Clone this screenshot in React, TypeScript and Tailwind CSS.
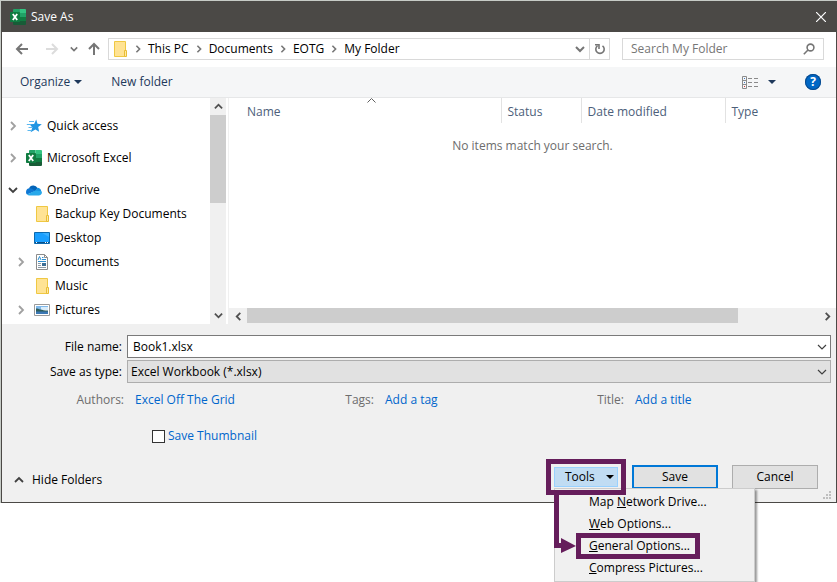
import React from "react";

type IconProps = { className?: string };

function Chevron({ dir, className = "", w = 10, s = 2 }: { dir: "up" | "down" | "left" | "right"; className?: string; w?: number; s?: number }) {
  const d = {
    up: "M1 7 5 3 9 7",
    down: "M1 3 5 7 9 3",
    left: "M7 1 3 5 7 9",
    right: "M3 1 7 5 3 9",
  }[dir];
  return (
    <svg className={`shrink-0 ${className}`} width={w} height={w} viewBox="0 0 10 10" fill="none" stroke="currentColor" strokeWidth={s} aria-hidden="true">
      <path d={d} />
    </svg>
  );
}

function Caret({ className = "" }: IconProps) {
  return (
    <svg className={`shrink-0 ${className}`} width="8" height="4" viewBox="0 0 8 4" fill="currentColor" aria-hidden="true">
      <path d="M0 0h8L4 4z" />
    </svg>
  );
}

function ExcelIcon() {
  return (
    <svg className="shrink-0" width="16" height="16" viewBox="0 0 16 16" aria-hidden="true">
      <path fill="#21a366" d="M3 1a1 1 0 0 1 1-1h5.500v4H3z" />
      <path fill="#33c481" d="M9.500 0H15a1 1 0 0 1 1 1v3H9.500z" />
      <path fill="#107c41" d="M3 4h6.500v4H3zM9.500 8H16v4H9.500z" />
      <path fill="#21a366" d="M9.500 4H16v4H9.500z" />
      <path fill="#185c37" d="M3 8h6.500v4H16v3a1 1 0 0 1-1 1H4a1 1 0 0 1-1-1z" />
      <rect fill="#107c41" y="3" width="10" height="10" rx="0.800" />
      <path stroke="#fff" strokeWidth="1.800" d="m2.800 5 4.400 6M7.200 5l-4.400 6" />
    </svg>
  );
}

function FolderIcon() {
  return (
    <svg className="shrink-0" width="16" height="16" viewBox="0 0 16 16" aria-hidden="true">
      <path fill="#ffe394" stroke="#efc843" d="M2.500.5h11v15h-11z" />
      <path fill="#ffe9a2" stroke="#e9bd35" d="M12.500 9.500h2v6h-2z" />
    </svg>
  );
}

function StarIcon() {
  return (
    <svg className="shrink-0" width="16" height="16" viewBox="0 0 16 16" aria-hidden="true">
      <path fill="#2196e3" d="m10.200 1.500 1.300 4.300 4.300.4-3.600 2.800.9 4.800-3.700-2.300-4.800 2.800L6.400 9.500 3.500 6.300l4.600-.4z" />
      <path stroke="#5cb8ef" d="M3 3.500h5M.800 6.500h4M2.500 9.500h4M1.500 12.500h4" />
    </svg>
  );
}

function CloudIcon() {
  return (
    <svg className="shrink-0" width="16" height="16" viewBox="0 0 16 16" aria-hidden="true">
      <path fill="#0364b8" d="M3 6.500A4.600 4.600 0 0 1 11.500 6L9 10z" />
      <path fill="#0f78d4" d="M3.500 6.300C1.500 6.300 0 8 0 10c0 1 .4 2 1 2.500L9.500 9 6 6.800a4 4 0 0 0-2.500-.5z" />
      <path fill="#1490df" d="M9 9l2.500-3.200c2 0 3.500 1.500 3.700 3.200L14 11z" />
      <path fill="#28a8ea" d="M9.500 8.500 1 12.500c.6.600 1.500 1 2.500 1H13a3 3 0 0 0 2.600-4.300z" />
    </svg>
  );
}

function DesktopIcon() {
  return (
    <svg className="shrink-0" width="16" height="16" viewBox="0 0 16 16" aria-hidden="true">
      <path fill="#1a9fff" stroke="#0c69ae" d="M.500 2.500h15v11H.500z" />
      <path fill="#3bb0ff" d="M8 3h7v4z" />
      <path stroke="#0b4f86" d="M1 12.500h14" />
      <path stroke="#fff" d="M2 12.500h1M11 12.500h1M13 12.500h1" />
    </svg>
  );
}

function DocumentIcon() {
  return (
    <svg className="shrink-0" width="16" height="16" viewBox="0 0 16 16" aria-hidden="true">
      <path fill="#fff" stroke="#8c8c8c" d="M2.500.5h8l3 3v12h-11zM10.500.5v3h3" />
      <path fill="none" stroke="#2f8fd0" d="m4 6 1.500-3.500L7 6M8 3.500h1.500M8 5.500h4M4 7.500h8" />
      <path stroke="#8c9aa6" d="M4 9.500h3M4 11.500h3M4 13.500h8" />
      <path fill="#3d6f96" d="M8 9h4v3H8z" />
    </svg>
  );
}

function PictureIcon() {
  return (
    <svg className="shrink-0" width="16" height="16" viewBox="0 0 16 16" aria-hidden="true">
      <path fill="#fff" stroke="#9a9a9a" d="M.500 2.500h15v11H.500z" />
      <path fill="#7fb8ea" d="M2 4h12v4H2z" />
      <path fill="#d8ecfa" d="M7 5h7v3H7z" />
      <path fill="#2d5d5b" d="M2 6.500c3 0 5 2 12 2V10H2z" />
      <path fill="#3c78b4" d="M2 9.500h12V12H2z" />
    </svg>
  );
}

function Arrow({ dir, className }: { dir: "left" | "right" | "up"; className?: string }) {
  const d = {
    left: "M14 8H3M8 3 3 8l5 5",
    right: "M2 8h11M8 3l5 5-5 5",
    up: "M8 14V3M3 8l5-5 5 5",
  }[dir];
  return (
    <svg className={className} width="16" height="16" viewBox="0 0 16 16" fill="none" stroke="currentColor" strokeWidth="2" aria-hidden="true">
      <path d={d} />
    </svg>
  );
}

const crumbs = ["This PC", "Documents", "EOTG", "My Folder"];

const roots = [
  { name: "Quick access", icon: <StarIcon />, open: false },
  { name: "Microsoft Excel", icon: <ExcelIcon />, open: false },
  { name: "OneDrive", icon: <CloudIcon />, open: true },
];

const children = [
  { name: "Backup Key Documents", icon: <FolderIcon />, expandable: false },
  { name: "Desktop", icon: <DesktopIcon />, expandable: false },
  { name: "Documents", icon: <DocumentIcon />, expandable: true },
  { name: "Music", icon: <FolderIcon />, expandable: false },
  { name: "Pictures", icon: <PictureIcon />, expandable: true },
];

const menuItems = [
  { before: "Map ", key: "N", after: "etwork Drive...", marked: false },
  { before: "", key: "W", after: "eb Options...", marked: false },
  { before: "", key: "G", after: "eneral Options...", marked: true },
  { before: "", key: "C", after: "ompress Pictures...", marked: false },
];

function TitleBar() {
  return (
    <header className="flex h-[31px] items-center bg-[#4b4946] pr-2.5 pl-2 text-white">
      <ExcelIcon />
      <h1 className="ml-[5px] flex-1">Save As</h1>
      <button type="button" aria-label="Close">
        <svg width="10" height="10" viewBox="0 0 10 10" stroke="currentColor" strokeWidth="1.200" aria-hidden="true">
          <path d="m0 0 10 10M10 0 0 10" />
        </svg>
      </button>
    </header>
  );
}

function AddressRow() {
  return (
    <div className="flex h-[35px] items-center bg-white px-3 pb-0.5 text-[#767676]">
      <button type="button" aria-label="Back"><Arrow dir="left" /></button>
      <button type="button" aria-label="Forward" className="ml-3.5 text-[#dcdcdc]"><Arrow dir="right" /></button>
      <button type="button" aria-label="Recent locations" className="ml-2.5"><Chevron dir="down" w={8} /></button>
      <button type="button" aria-label="Up" className="ml-2"><Arrow dir="up" /></button>
      <nav aria-label="Address" className="ml-1.5 flex h-[22px] flex-1 items-center border border-[#d9d9d9] pl-[3px]">
        <FolderIcon />
        <ol className="flex flex-1 items-center text-black">
          {crumbs.map((c) => (
            <li key={c} className="flex items-center">
              <span className="flex w-5 justify-center text-[#767676]"><Chevron dir="right" w={8} /></span>
              <button type="button">{c}</button>
            </li>
          ))}
        </ol>
        <button type="button" aria-label="Previous locations" className="px-1"><Chevron dir="down" w={10} /></button>
        <button type="button" aria-label="Refresh" className="flex h-full w-5 items-center justify-center border-l border-[#d9d9d9]">
          <svg width="12" height="12" viewBox="0 0 12 12" fill="none" stroke="currentColor" strokeWidth="1.600" aria-hidden="true">
            <path d="M8.500 2.800A4.200 4.200 0 1 1 3.500 2.800M1 1.800h4V6" />
          </svg>
        </button>
      </nav>
      <label className="ml-3 flex h-[22px] w-[202px] items-center border border-[#d9d9d9] px-2">
        <input type="search" aria-label="Search My Folder" placeholder="Search My Folder" className="min-w-0 flex-1 outline-none placeholder:text-[#767676]" />
        <svg width="12" height="12" viewBox="0 0 12 12" fill="none" stroke="currentColor" strokeWidth="1.600" aria-hidden="true">
          <circle cx="7.500" cy="4.500" r="3.400" />
          <path d="M5 7 .8 11.200" />
        </svg>
      </label>
    </div>
  );
}

function Toolbar() {
  return (
    <div className="flex h-[31px] items-center border-b border-[#e6e7e8] bg-[#f5f6f7] pr-[15px] pl-[18px] text-[#1e395b]">
      <button type="button" className="flex items-center gap-1">Organize <Caret /></button>
      <button type="button" className="ml-[29px]">New folder</button>
      <button type="button" aria-label="Change your view" className="ml-auto flex items-center gap-2.5">
        <svg width="16" height="13" viewBox="0 0 16 13" fill="none" aria-hidden="true">
          <path stroke="#8a8a8a" d="M.500.5h4v12h-4zM.500 4.500h4M.500 8.500h4M6 2.500h4M12 2.500h4M6 6.500h4M12 6.500h4M6 10.500h4M12 10.500h4" />
          <path stroke="#3d78c0" d="M2 2.500h1M2 6.500h1" />
          <path stroke="#d03030" d="M2 10.500h1" />
        </svg>
        <Caret />
      </button>
      <button type="button" aria-label="Help" className="ml-[29px] flex size-4 items-center justify-center rounded-full bg-[#0067c5] text-xs font-bold text-white ring-1 ring-[#0a4a8c] ring-inset">?</button>
    </div>
  );
}

function FolderTree() {
  return (
    <div className="flex w-[227px] shrink-0 border-r border-[#f0f0f0]">
      <nav aria-label="Folders" className="flex-1 pt-4 pb-0.5">
        <ul className="space-y-2">
          {roots.map((r) => (
            <li key={r.name}>
              <div className="flex h-6 items-center pl-1.5">
                <button type="button" aria-label={`Toggle ${r.name}`} className={r.open ? "text-[#404040]" : "text-[#a0a0a0]"}>
                  <Chevron dir={r.open ? "down" : "right"} w={10} s={1.8} />
                </button>
                <span className="ml-2 flex items-center gap-[5px]">{r.icon}{r.name}</span>
              </div>
              {r.open && (
                <ul>
                  {children.map((c) => (
                    <li key={c.name} className="flex h-6 items-center pl-3.5">
                      <span className="w-2.5 text-[#a0a0a0]">
                        {c.expandable && <button type="button" aria-label={`Toggle ${c.name}`} className="block"><Chevron dir="right" w={10} s={1.8} /></button>}
                      </span>
                      <span className="ml-2 flex items-center gap-[5px] whitespace-nowrap">{c.icon}{c.name}</span>
                    </li>
                  ))}
                </ul>
              )}
            </li>
          ))}
        </ul>
      </nav>
      <div className="mr-[2px] flex w-4 flex-col items-center bg-[#f0f0f0] text-[#505050]">
        <span className="flex h-[17px] items-center"><Chevron dir="up" w={9} /></span>
        <span className="h-[88px] w-full bg-[#cdcdcd]" />
        <span className="mt-auto flex h-[17px] items-center"><Chevron dir="down" w={9} /></span>
      </div>
    </div>
  );
}

function FileList() {
  return (
    <div className="flex min-w-0 flex-1 flex-col">
      <table className="w-full table-fixed text-left">
        <thead>
          <tr className="h-[25px] text-[#4c607a]">
            <th className="relative pt-0.5 pl-[18px] font-normal">
              Name
              <span className="absolute top-0 right-0 left-3.5 flex justify-center text-[#606060]">
                <svg width="9" height="5" viewBox="0 0 9 5" fill="none" stroke="currentColor" aria-hidden="true"><path d="M.500 4.500l4-4 4 4" /></svg>
              </span>
            </th>
            <th className="w-20 border-l border-[#e2e2e2] pt-0.5 pl-1.5 font-normal">Status</th>
            <th className="w-36 border-l border-[#e2e2e2] pt-0.5 pl-1.5 font-normal">Date modified</th>
            <th className="w-[111px] border-l border-[#e2e2e2] pt-0.5 pl-1.5 font-normal">Type</th>
          </tr>
        </thead>
        <tbody>
          <tr>
            <td colSpan={4} className="pt-[15px] text-center text-[#6d6d6d]">No items match your search.</td>
          </tr>
        </tbody>
      </table>
      <div className="mt-auto flex h-4 items-center bg-[#f0f0f0] text-[#505050]">
        <span className="flex w-[18px] justify-center"><Chevron dir="left" w={9} /></span>
        <span className="flex h-full flex-1"><span className="h-[15px] w-[86%] bg-[#cdcdcd]" /></span>
        <span className="flex w-[18px] justify-center"><Chevron dir="right" w={9} /></span>
      </div>
    </div>
  );
}

function Meta({ label, value }: { label: string; value: string }) {
  return (
    <div className="flex w-[250px] gap-[11px]">
      <dt className="w-[122px] text-right text-[#6d6d6d]">{label}</dt>
      <dd><a href="#edit" className="text-[#0066cc]">{value}</a></dd>
    </div>
  );
}

function ToolsMenu() {
  return (
    <div className="relative">
      <div className="border-[5px] border-[#651d5b] bg-[#f0f0f0] p-[3px]">
        <button type="button" aria-haspopup="menu" aria-expanded="true" className="flex h-5 w-16 items-center justify-between border border-[#99d1ff] bg-[#c0dcf3] pr-[3px] pl-2.5">
          Tools <Caret />
        </button>
      </div>
      <ul role="menu" className="absolute top-[29px] left-2 w-[201px] border border-[#ccc] bg-[#f0f0f0] py-0.5 shadow-[2px_2px_2px_rgba(0,0,0,0.400)]">
        {menuItems.map((m) => (
          <li key={m.key} role="none" className="relative">
            <button type="button" role="menuitem" className="block h-[22px] w-full pl-[34px] text-left whitespace-pre">
              {m.before}<u>{m.key}</u>{m.after}
            </button>
            {m.marked && <span className="pointer-events-none absolute -inset-y-0.5 left-[21px] w-[124px] border-[5px] border-[#651d5b]" />}
          </li>
        ))}
      </ul>
      <span className="pointer-events-none absolute inset-0 border-[5px] border-[#651d5b]" />
      <svg className="pointer-events-none absolute top-[34px] left-2 text-[#651d5b]" width="22" height="60" viewBox="0 0 22 60" fill="currentColor" aria-hidden="true">
        <path d="M0 0h5v50h2v-5l15 8-15 7v-5H0z" />
      </svg>
    </div>
  );
}

function SaveForm() {
  return (
    <form className="bg-[#f0f0f0] pt-[11px]" onSubmit={(e) => e.preventDefault()}>
      <div className="grid grid-cols-[120px_1fr] items-center gap-x-[5px] gap-y-[2px] pr-[5px]">
        <label htmlFor="file-name" className="text-right">File name:</label>
        <div className="relative">
          <input id="file-name" type="text" defaultValue="Book1.xlsx" className="block h-[23px] w-full border border-[#7a7a7a] bg-white pr-6 pl-[5px] outline-none" />
          <Chevron dir="down" w={10} s={1.2} className="pointer-events-none absolute top-[7px] right-1 text-[#404040]" />
        </div>
        <label htmlFor="file-type" className="text-right">Save as type:</label>
        <div className="relative">
          <select id="file-type" className="block h-[23px] w-full appearance-none border border-[#adadad] bg-[#e1e1e1] pr-6 pl-[3px] outline-none">
            <option>Excel Workbook (*.xlsx)</option>
          </select>
          <Chevron dir="down" w={10} s={1.2} className="pointer-events-none absolute top-[7px] right-1 text-[#404040]" />
        </div>
      </div>
      <dl className="mt-[9px] flex leading-4">
        <Meta label="Authors:" value="Excel Off The Grid" />
        <Meta label="Tags:" value="Add a tag" />
        <Meta label="Title:" value="Add a title" />
      </dl>
      <label className="mt-5 ml-[150px] flex w-fit items-center gap-[3px] text-[#0066cc]">
        <input type="checkbox" className="size-[13px] appearance-none border border-[#333] bg-white checked:bg-[#0066cc]" />
        Save Thumbnail
      </label>
      <div className="relative mt-[15px] flex h-[43px] items-start pr-[18px] pl-3">
        <button type="button" className="mt-[13px] flex items-center gap-2"><Chevron dir="up" w={10} s={1.8} className="text-[#404040]" />Hide Folders</button>
        <div className="ml-auto flex items-start">
          <ToolsMenu />
          <button type="submit" className="mt-[6px] ml-1.5 h-6 w-[86px] border-2 border-[#0078d7] bg-[#e1e1e1]">Save</button>
          <button type="button" className="mt-[6px] ml-3.5 h-6 w-[86px] border border-[#adadad] bg-[#e1e1e1]">Cancel</button>
        </div>
        <svg className="absolute right-1 bottom-0.5" width="10" height="10" viewBox="0 0 10 10" fill="#bfbfbf" aria-hidden="true">
          <path d="M7 1h2v2H7zM4 4h2v2H4zM7 4h2v2H7zM1 7h2v2H1zM4 7h2v2H4zM7 7h2v2H7z" />
        </svg>
      </div>
    </form>
  );
}

export default function App() {
  return (
    <div className="min-h-screen bg-white font-['Open_Sans','Noto_Sans',sans-serif] text-xs text-black">
      <div className="bg-[#c6cbc6] pt-px pl-px">
        <main className="border-x border-b border-[#4b4946]">
          <TitleBar />
          <AddressRow />
          <Toolbar />
          <div className="flex bg-white">
            <FolderTree />
            <FileList />
          </div>
          <SaveForm />
        </main>
      </div>
    </div>
  );
}
